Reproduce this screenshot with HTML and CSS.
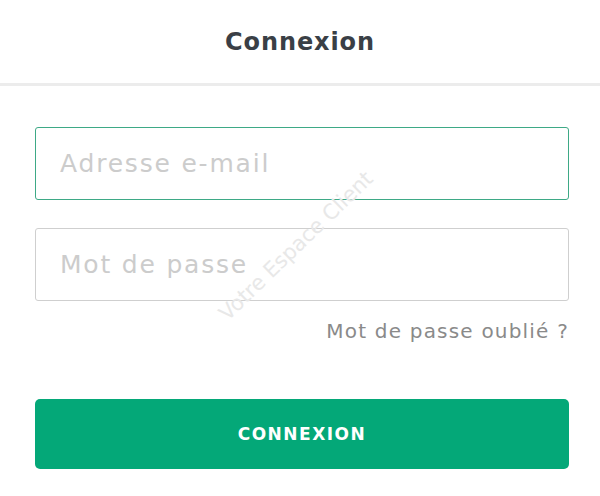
FILE: index.html
```html
<!DOCTYPE html>
<html lang="fr">
<head>
<meta charset="utf-8">
<link rel="stylesheet" href="styles.css">
</head>
<body>
<header class="top">
  <h1 class="title">Connexion</h1>
</header>
<main class="form">
  <div class="field field-active">Adresse e-mail</div>
  <div class="field">Mot de passe</div>
  <div class="forgot">Mot de passe oublié ?</div>
  <button class="btn">CONNEXION</button>
  <div class="watermark">Votre Espace Client</div>
</main>
</body>
</html>
```
FILE: styles.css
```css
html, body {
  margin: 0;
  padding: 0;
  background: #fff;
  font-family: "DejaVu Sans", "Open Sans", sans-serif;
}
.top {
  height: 83px;
  border-bottom: 3px solid #ececec;
  display: flex;
  align-items: center;
  justify-content: center;
}
.title {
  margin: 0;
  font-size: 24px;
  font-weight: 700;
  color: #3a3f46;
  letter-spacing: 0.9px;
}
.form {
  position: relative;
  padding: 41px 31px 0 35px;
  display: flex;
  flex-direction: column;
}
.field {
  height: 71px;
  border: 1px solid #cfcfcf;
  border-radius: 3px;
  display: flex;
  align-items: center;
  padding-left: 24px;
  font-size: 25px;
  letter-spacing: 1.8px;
  color: #cccccc;
  margin-bottom: 28px;
}
.field-active {
  border-color: #3ea986;
}
.forgot {
  align-self: flex-end;
  margin-top: -11px;
  font-size: 20px;
  letter-spacing: 1.2px;
  color: #8a8a8a;
  line-height: 26px;
}
.btn {
  margin-top: 55px;
  height: 70px;
  border: none;
  border-radius: 5px;
  background: #04a878;
  color: #fff;
  font-family: inherit;
  font-size: 17px;
  font-weight: 700;
  letter-spacing: 1.5px;
}
.watermark {
  position: absolute;
  left: 194px;
  top: 148px;
  font-size: 21px;
  color: #e8e8e8;
  transform: rotate(-44deg);
  transform-origin: center;
  white-space: nowrap;
}
```
